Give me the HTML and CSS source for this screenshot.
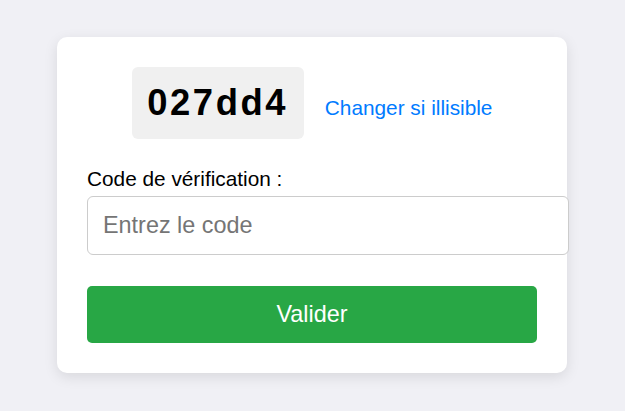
FILE: index.html
```html
<!DOCTYPE html>
<html lang="fr">
<head>
<meta charset="utf-8">
<title>Vérification</title>
<link rel="stylesheet" href="styles.css">
</head>
<body>
  <form class="card">
    <div class="captcha-row">
      <div class="captcha">027dd4</div>
      <a class="refresh" href="#">Changer si illisible</a>
    </div>
    <label class="label" for="code">Code de vérification :</label>
    <input class="input" id="code" type="text" placeholder="Entrez le code">
    <button class="submit" type="button">Valider</button>
  </form>
</body>
</html>
```
FILE: styles.css
```css
html, body {
  margin: 0;
  padding: 0;
}
body {
  box-sizing: border-box;
  background: #f0f0f5;
  font-family: "Liberation Sans", Arial, sans-serif;
  min-height: 100vh;
  padding: 0 1px 1px 0;
  display: flex;
  align-items: center;
  justify-content: center;
}
.card {
  width: 450px;
  padding: 30px;
  background: #fff;
  border-radius: 10px;
  box-shadow: 0 4px 14px rgba(0, 0, 0, 0.1);
  display: flex;
  flex-direction: column;
  margin: 0;
}
.captcha-row {
  display: flex;
  justify-content: center;
  align-items: baseline;
  gap: 21px;
  margin-bottom: 28px;
}
.captcha {
  background: #f0f0f0;
  border-radius: 6px;
  padding: 15px 15.6px;
  font-size: 36.4px;
  font-weight: bold;
  letter-spacing: 2.6px;
  color: #000;
}
.refresh {
  color: #007bff;
  text-decoration: none;
  font-size: 20.8px;
}
.label {
  display: block;
  font-size: 20.8px;
  color: #000;
  margin-bottom: 5px;
}
.input {
  box-sizing: content-box;
  width: 100%;
  padding: 15px;
  margin: 0 0 31px 0;
  border: 1px solid #ccc;
  border-radius: 6px;
  font-family: "Liberation Sans", Arial, sans-serif;
  font-size: 23.4px;
  line-height: normal;
  color: #000;
  background: #fff;
  outline: none;
}
.input::placeholder {
  color: #757575;
}
.submit {
  display: block;
  width: 100%;
  padding: 15px;
  border: none;
  border-radius: 5px;
  background: #28a745;
  color: #fff;
  font-family: "Liberation Sans", Arial, sans-serif;
  font-size: 23.4px;
  line-height: normal;
  cursor: pointer;
}
```
